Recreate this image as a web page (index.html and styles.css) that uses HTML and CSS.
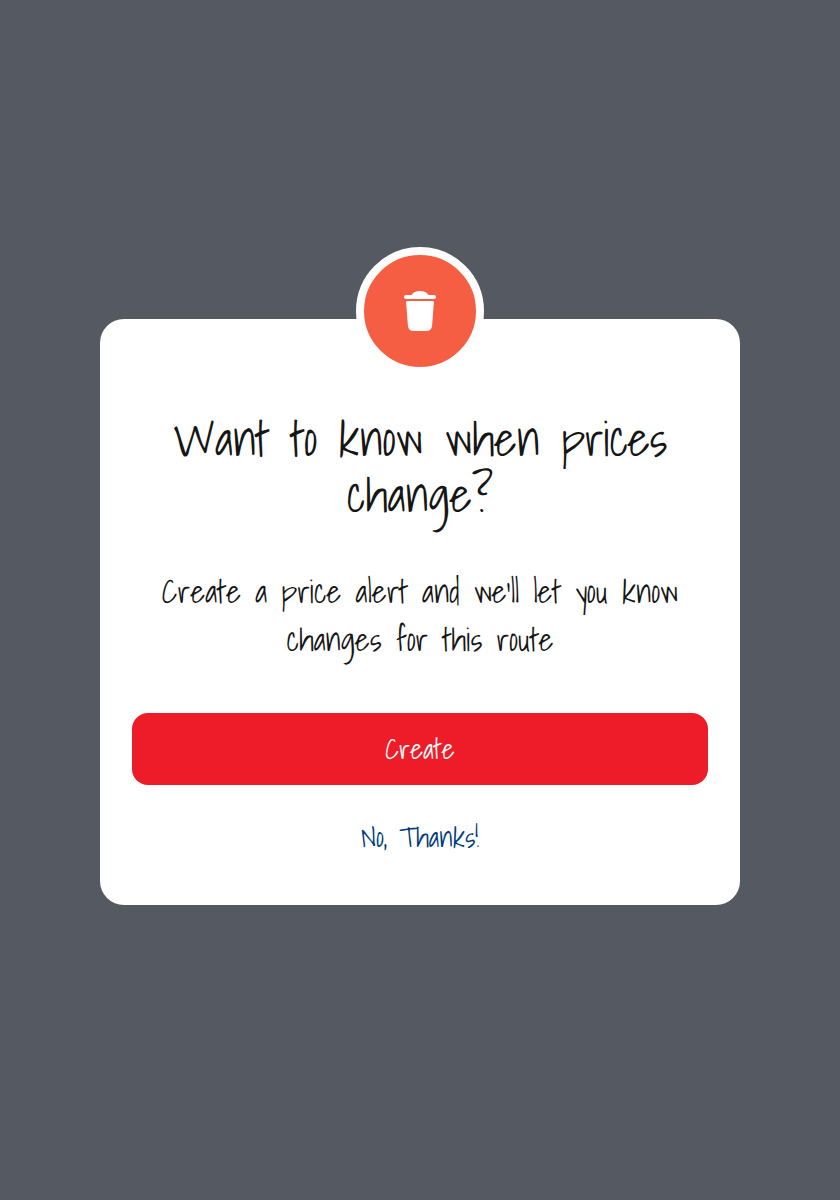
FILE: index.html
```html
<!DOCTYPE html>
<html lang="en">
<head>
<meta charset="utf-8">
<title>Price alert</title>
<link rel="stylesheet" href="styles.css">
</head>
<body>
<main class="dialog">
  <div class="badge">
    <svg class="badge-icon" viewBox="0 0 32 40" aria-hidden="true">
      <path d="M2 4H7.500C9 1.400 12 0 16 0S23 1.400 24.500 4H30A2 2 0 0 1 30 8H2A2 2 0 0 1 2 4Z"/>
      <path d="M3.300 10H28.700Q30 10 29.900 11.300L28.100 34.500Q27.600 40 22.200 40H9.800Q4.400 40 3.900 34.500L2.100 11.300Q2 10 3.300 10Z"/>
    </svg>
  </div>
  <h1 class="title">Want to know when <span class="tight">prices</span> change?</h1>
  <p class="message"><span class="loose">Create</span> a price alert and <span class="tight">we'll</span> let you know changes for this route</p>
  <button class="create" type="button"><span class="loose">Create</span></button>
  <button class="dismiss" type="button">No, Thanks!</button>
</main>
</body>
</html>
```
FILE: styles.css
```css
* { box-sizing: border-box; }
body {
  margin: 0;
  height: 1200px;
  padding-top: 319px;
  background: #555961;
  font-family: "Shadows Into Light", Lato, sans-serif;
  font-weight: 400;
  color: #161616;
  text-rendering: geometricPrecision;
}
.dialog {
  position: relative;
  width: 640px;
  height: 586px;
  margin: 0 auto;
  padding: 92px 32px 0;
  border-radius: 24px;
  background: #fff;
}
.badge {
  position: absolute;
  top: -72px;
  left: 256px;
  display: flex;
  align-items: center;
  justify-content: center;
  width: 128px;
  height: 128px;
  border: 8px solid #fff;
  border-radius: 50%;
  background: #f65e43;
}
.badge-icon { width: 32px; height: 40px; fill: #fff; }
.title, .message { margin: 0; text-align: center; }
.title { font-size: 48px; font-weight: 400; line-height: 56px; word-spacing: .5px; }
.message { margin-top: 44px; font-size: 32px; line-height: 48px; }
.tight { letter-spacing: -.4px; }
.loose { letter-spacing: .2px; }
.create, .dismiss {
  display: flex;
  align-items: center;
  justify-content: center;
  width: 576px;
  border: 0;
  padding: 0 0 2px;
  font: inherit;
  font-size: 28px;
}
.create {
  height: 72px;
  margin-top: 50px;
  border-radius: 16px;
  background: #ee1c28;
  color: #fff;
}
.dismiss { height: 72px; margin-top: 16px; background: none; color: #003b7b; }
```
